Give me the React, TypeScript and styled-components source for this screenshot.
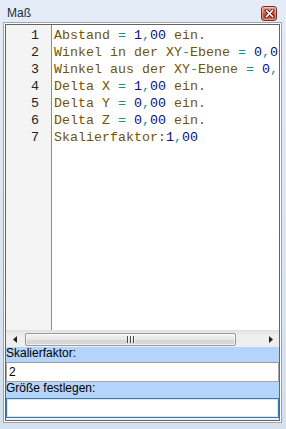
import React from 'react'
import styled, { createGlobalStyle } from 'styled-components'

const GlobalStyle = createGlobalStyle`
  html, body {
    margin: 0;
    padding: 0;
    background: #d9e4f1;
  }
  * {
    box-sizing: border-box;
  }
`

const Window = styled.div`
  display: flex;
  flex-direction: column;
  width: 286px;
  height: 429px;
  background: linear-gradient(#e3ecf7, #d4e0ee);
  font-family: 'Liberation Sans', Arial, sans-serif;
  font-size: 12px;
  color: #000;
`

const TitleBar = styled.div`
  display: flex;
  align-items: flex-start;
  height: 22px;
  padding: 6px 9px 0 7px;
`

const Title = styled.div`
  flex: 1;
  line-height: 14px;
  color: #1e2a3a;
`

const CloseButton = styled.div`
  display: flex;
  align-items: center;
  justify-content: center;
  width: 16px;
  height: 15px;
  border: 1px solid #7a2c1c;
  border-radius: 3px;
  background: linear-gradient(#eba594 0%, #db6a4f 45%, #c9452a 55%, #d4674a 100%);
  box-shadow: inset 0 0 0 1px rgba(255, 255, 255, 0.35);
`

const Panel = styled.div`
  display: flex;
  flex-direction: column;
  height: 401px;
  margin: 0 4px 0 3px;
  padding: 2px;
  border: 1px solid #a3a3a3;
  background: #f0f0f0;
  box-shadow: inset 0 0 0 1px #ffffff, inset 0 0 0 2px #646464;
`

const Editor = styled.div`
  display: flex;
  height: 305px;
  background: #fff;
  overflow: hidden;
`

const Gutter = styled.div`
  width: 46px;
  padding: 2px 12px 0 0;
  background: #f4f4f4;
  border-right: 1px solid #8c8c8c;
  text-align: right;
  font-family: 'Liberation Mono', 'Courier New', monospace;
  font-size: 13.33px;
  line-height: 17px;
  color: #222;
`

const Code = styled.div`
  flex: 1;
  padding: 2px 0 0 2px;
  font-family: 'Liberation Mono', 'Courier New', monospace;
  font-size: 13.33px;
  line-height: 17px;
  white-space: pre;
  overflow: hidden;
`

const Line = styled.div`
  height: 17px;
`

const Tok = styled.span<{ $kind: 'id' | 'op' | 'num' }>`
  color: ${p => (p.$kind === 'id' ? '#735500' : p.$kind === 'op' ? '#0b9696' : '#0c0c86')};
`

const HScroll = styled.div`
  display: flex;
  align-items: center;
  height: 17px;
  background: linear-gradient(#e4e4e4, #efefef 30%, #eeeeee);
  border-top: 1px solid #e0e0e0;
`

const ArrowButton = styled.div`
  display: flex;
  align-items: center;
  justify-content: center;
  width: 17px;
  height: 16px;
`

const Thumb = styled.div`
  display: flex;
  align-items: center;
  justify-content: center;
  width: 211px;
  height: 13px;
  margin-left: 2px;
  border: 1px solid #9a9a9a;
  border-radius: 2px;
  background: linear-gradient(#f4f4f4, #e7e7e7 50%, #d6d6d6 51%, #d9d9d9);
  box-shadow: inset 0 0 0 1px rgba(255, 255, 255, 0.6);
`

const Track = styled.div`
  flex: 1;
`

const FieldLabel = styled.div<{ $h: number }>`
  height: ${p => p.$h}px;
  line-height: 13px;
  background: #b5d4fb;
  color: #000;
`

const Field = styled.input<{ $focused?: boolean }>`
  display: block;
  width: 100%;
  height: 20px;
  margin: 0;
  padding: 0 2px;
  font-family: 'Liberation Sans', Arial, sans-serif;
  font-size: 12px;
  color: #000;
  background: #fff;
  outline: none;
  border: 1px solid ${p => (p.$focused ? '#3d7bad' : '#a8a8a8')};
  border-top-color: ${p => (p.$focused ? '#3d7bad' : '#9c9c9c')};
  box-shadow: ${p => (p.$focused ? 'inset 0 0 0 1px #d6e6f3' : 'none')};
`

type Part = [string, 'id' | 'op' | 'num']

// Zeilen 2 und 3 laufen rechts aus dem sichtbaren Bereich
const lines: Part[][] = [
  [['Abstand ', 'id'], ['=', 'op'], [' ', 'id'], ['1', 'num'], [',', 'op'], ['00', 'num'], [' ein.', 'id']],
  [['Winkel in der XY', 'id'], ['-', 'op'], ['Ebene ', 'id'], ['=', 'op'], [' ', 'id'], ['0', 'num'], [',', 'op'], ['0', 'num']],
  [['Winkel aus der XY', 'id'], ['-', 'op'], ['Ebene ', 'id'], ['=', 'op'], [' ', 'id'], ['0', 'num'], [',', 'op']],
  [['Delta X ', 'id'], ['=', 'op'], [' ', 'id'], ['1', 'num'], [',', 'op'], ['00', 'num'], [' ein.', 'id']],
  [['Delta Y ', 'id'], ['=', 'op'], [' ', 'id'], ['0', 'num'], [',', 'op'], ['00', 'num'], [' ein.', 'id']],
  [['Delta Z ', 'id'], ['=', 'op'], [' ', 'id'], ['0', 'num'], [',', 'op'], ['00', 'num'], [' ein.', 'id']],
  [['Skalierfaktor', 'id'], [':', 'id'], ['1', 'num'], [',', 'op'], ['00', 'num']],
]

const App: React.FC = () => {
  return (
    <>
      <GlobalStyle />
      <Window>
        <TitleBar>
          <Title>Maß</Title>
          <CloseButton>
            <svg width="11" height="9" viewBox="0 0 11 9">
              <path d="M2.5 1.5 L8.5 7.5 M8.5 1.5 L2.5 7.5" stroke="#5a1c10" strokeWidth="3.4" strokeLinecap="square" />
              <path d="M2.5 1.5 L8.5 7.5 M8.5 1.5 L2.5 7.5" stroke="#ffffff" strokeWidth="1.6" strokeLinecap="square" />
            </svg>
          </CloseButton>
        </TitleBar>

        <Panel>
          {/* Editor mit Zeilennummern */}
          <Editor>
            <Gutter>
              {lines.map((_, i) => (
                <Line key={i}>{i + 1}</Line>
              ))}
            </Gutter>
            <Code>
              {lines.map((parts, i) => (
                <Line key={i}>
                  {parts.map(([text, kind], j) => (
                    <Tok key={j} $kind={kind}>
                      {text}
                    </Tok>
                  ))}
                </Line>
              ))}
            </Code>
          </Editor>

          <HScroll>
            <ArrowButton>
              <svg width="4" height="7" viewBox="0 0 4 7">
                <path d="M4 0 L0 3.5 L4 7 Z" fill="#222" />
              </svg>
            </ArrowButton>
            <Thumb>
              <svg width="8" height="7" viewBox="0 0 8 7">
                <path d="M0.5 0 V7 M3.5 0 V7 M6.5 0 V7" stroke="#4a4a4a" strokeWidth="1" />
                <path d="M1.5 0 V7 M4.5 0 V7 M7.5 0 V7" stroke="#f8f8f8" strokeWidth="1" />
              </svg>
            </Thumb>
            <Track />
            <ArrowButton>
              <svg width="4" height="7" viewBox="0 0 4 7">
                <path d="M0 0 L4 3.5 L0 7 Z" fill="#222" />
              </svg>
            </ArrowButton>
          </HScroll>

          <FieldLabel $h={15}>Skalierfaktor:</FieldLabel>
          <Field defaultValue="2" readOnly />
          <FieldLabel $h={16}>Größe festlegen:</FieldLabel>
          <Field $focused defaultValue="" readOnly />
        </Panel>
      </Window>
    </>
  )
}

export default App
